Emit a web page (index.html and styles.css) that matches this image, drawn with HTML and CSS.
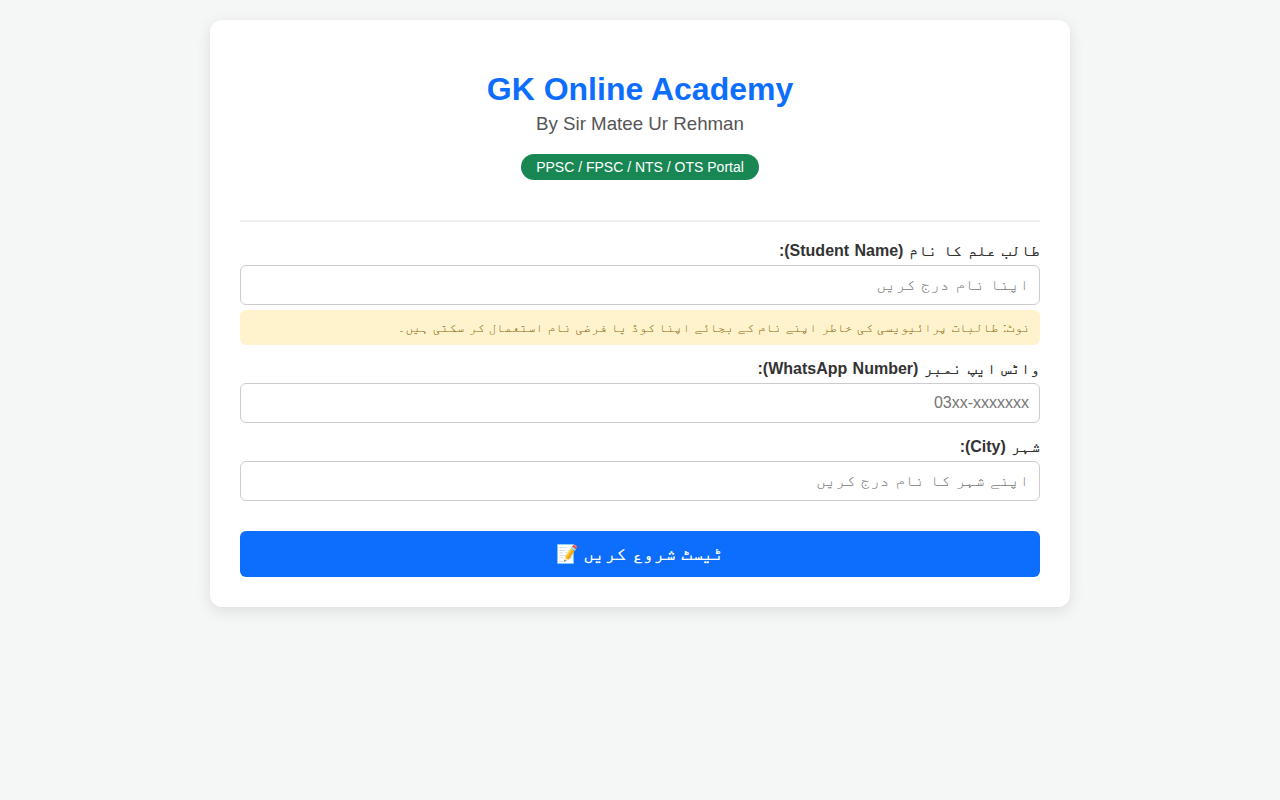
FILE: index.html
```html
<!DOCTYPE html>
<html>
<head>
<meta charset="utf-8">
<title>GK Online Academy</title>
<link rel="stylesheet" href="styles.css">
</head>
<body>
<main class="card">
  <header class="head">
    <h1>GK Online Academy</h1>
    <h3>By Sir Matee Ur Rehman</h3>
    <span class="badge">PPSC / FPSC / NTS / OTS Portal</span>
  </header>
  <form class="form" dir="rtl">
    <div class="field">
      <label>طالب علم کا نام (Student Name):</label>
      <input type="text" placeholder="اپنا نام درج کریں">
      <div class="note">نوٹ: طالبات پرائیویسی کی خاطر اپنے نام کے بجائے اپنا کوڈ یا فرضی نام استعمال کر سکتی ہیں۔</div>
    </div>
    <div class="field">
      <label>واٹس ایپ نمبر (WhatsApp Number):</label>
      <input type="text" placeholder="03xx-xxxxxxx">
    </div>
    <div class="field">
      <label>شہر (City):</label>
      <input type="text" placeholder="اپنے شہر کا نام درج کریں">
    </div>
    <button type="button">ٹیسٹ شروع کریں 📝</button>
  </form>
</main>
</body>
</html>
```
FILE: styles.css
```css
* { box-sizing: border-box; }
body {
  margin: 0;
  padding: 20px;
  background: #f4f7f6;
  font-family: "Liberation Sans", FreeMono, sans-serif;
  color: #333;
}
.card {
  width: 860px;
  margin: 0 auto;
  padding: 30px;
  background: #fff;
  border-radius: 12px;
  box-shadow: 0 4px 15px rgba(0,0,0,0.1);
}
.head {
  text-align: center;
  padding: 21px 0 40px;
  margin-bottom: 20px;
  border-bottom: 2px solid #eee;
}
h1 { margin: 0; font-size: 32px; line-height: 37px; color: #0d6efd; font-weight: 700; }
h3 { margin: 5px 0 19px; font-size: 18.72px; line-height: 22px; color: #555; font-weight: 400; }
.badge {
  display: inline-block;
  background: #198754;
  color: #fff;
  font-size: 14px;
  line-height: 16px;
  padding: 5px 15px;
  border-radius: 20px;
}
.field { margin-bottom: 15px; }
label {
  display: block;
  font-weight: 700;
  font-size: 16px;
  line-height: 18px;
  margin-bottom: 5px;
  color: #333;
  word-spacing: 0.9px;
}
input {
  display: block;
  width: 100%;
  height: 40px;
  padding: 10px;
  border: 1px solid #ccc;
  border-radius: 6px;
  font-size: 16px;
  font-family: inherit;
  word-spacing: 1.6px;
}
.note {
  margin-top: 5px;
  padding: 10px;
  background: #fff3cd;
  color: #856404;
  border-radius: 6px;
  font-size: 13px;
  line-height: 15px;
  word-spacing: 0.8px;
}
button {
  display: block;
  width: 100%;
  height: 46px;
  margin-top: 30px;
  border: 0;
  border-radius: 6px;
  background: #0d6efd;
  color: #fff;
  font-size: 18px;
  font-weight: 700;
  font-family: inherit;
  word-spacing: 0.7px;
}
```
